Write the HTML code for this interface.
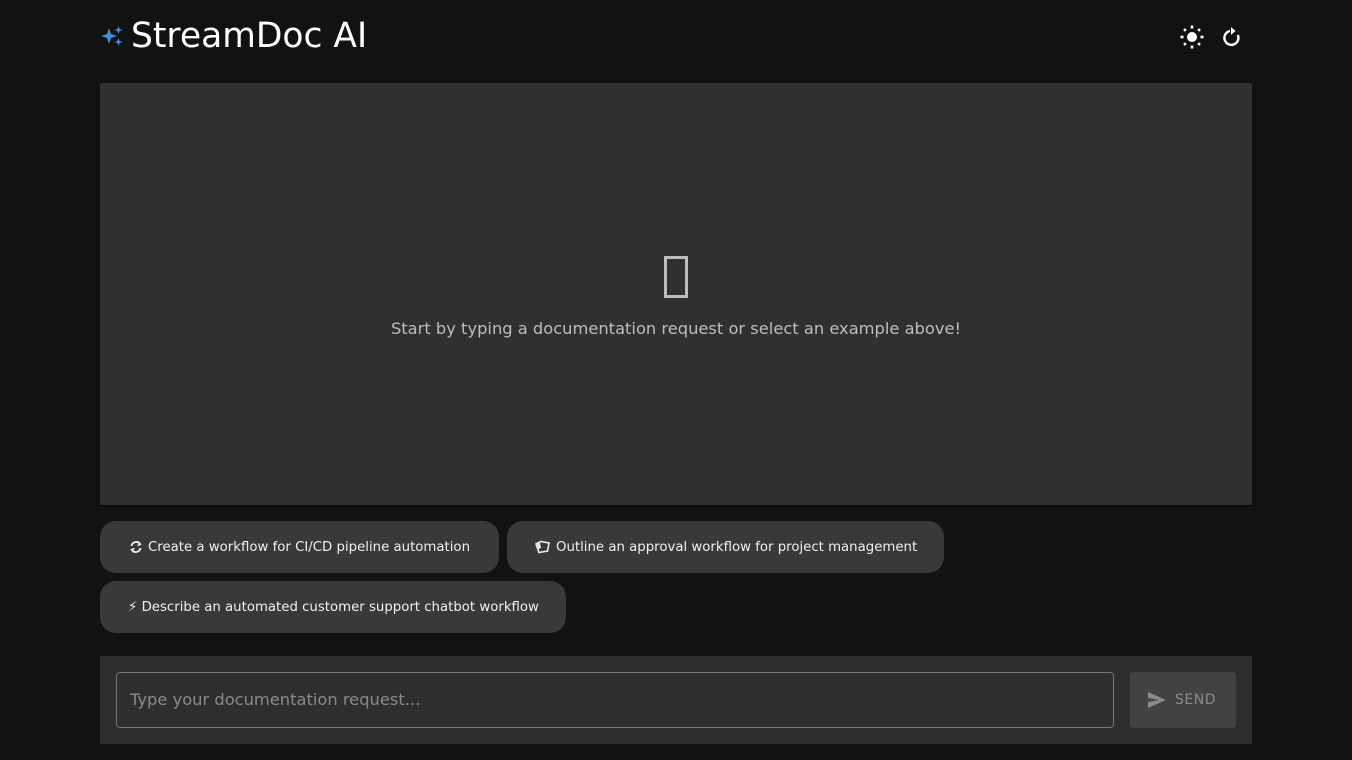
<!DOCTYPE html>
<html><head><meta charset="utf-8"><style>
*{box-sizing:border-box;margin:0;padding:0}
body{width:1352px;height:760px;background:#121212;font-family:"DejaVu Sans","Liberation Sans",sans-serif;color:#fff;position:relative;overflow:hidden}
.title{position:absolute;left:100px;top:14px;display:flex;align-items:center;font-size:34.5px;height:44px}
.title svg{margin-right:7px}
.icons{position:absolute;top:24px;left:1180px}
.panel{position:absolute;left:100px;top:83px;width:1152px;height:422px;background:#303030;box-shadow:0 1px 3px rgba(0,0,0,.5)}
.box{position:absolute;left:664px;top:256px;width:24px;height:42px;border:3px solid #bdbdbd}
.msg{position:absolute;left:0;width:1352px;top:319px;text-align:center;font-size:16.3px;color:#bdbdbd}
.chip{position:absolute;height:52px;background:#393939;border-radius:16px;font-size:13.3px;color:#f0f0f0;display:flex;align-items:center;padding-left:29px}
.chip svg{margin-right:5px}
.bar{position:absolute;left:100px;top:656px;width:1152px;height:88px;background:#2e2e2e}
.inp{position:absolute;left:116px;top:672px;width:998px;height:56px;border:1px solid #777;border-radius:4px;font-size:16.3px;color:#8a8a8a;padding-left:13px;line-height:54px}
.send{position:absolute;left:1130px;top:672px;width:106px;height:56px;background:#424242;border-radius:4px;color:#8a8a8a;font-size:14px;letter-spacing:.5px;display:flex;align-items:center;padding-left:17px}
</style></head><body>
<div class="title"><svg width="24" height="26" viewBox="0 0 24 26"><path fill="#3d8fe0" d="M9 5 L11 11 L17 13 L11 15 L9 21 L7 15 L1 13 L7 11Z M18.5 3 L19.5 6 L22.5 7 L19.5 8 L18.5 11 L17.5 8 L14.5 7 L17.5 6Z M18.5 15 L19.5 18 L22.5 19 L19.5 20 L18.5 23 L17.5 20 L14.5 19 L17.5 18Z"/></svg>StreamDoc AI</div>
<svg class="icons" width="66" height="26" viewBox="0 0 66 26">
<circle cx="12" cy="13" r="5" fill="#fff"/>
<g stroke="#fff" stroke-width="2.6" stroke-linecap="butt"><line x1="12" y1="1.5" x2="12" y2="4.5"/><line x1="12" y1="21.5" x2="12" y2="24.5"/><line x1="0.5" y1="13" x2="3.5" y2="13"/><line x1="20.5" y1="13" x2="23.5" y2="13"/><line x1="4" y1="5" x2="5.8" y2="6.8"/><line x1="18.2" y1="19.2" x2="20" y2="21"/><line x1="4" y1="21" x2="5.8" y2="19.2"/><line x1="18.2" y1="6.8" x2="20" y2="5"/></g>
<path d="M50 7 A7 7 0 1 0 57.8 11" fill="none" stroke="#fff" stroke-width="2.4"/><path d="M51 3 L55.5 7 L51 11Z" fill="#fff"/>
</svg>
<div class="panel"></div>
<div class="box"></div>
<div class="msg">Start by typing a documentation request or select an example above!</div>
<div class="chip" style="left:100px;top:521px;width:399px"><svg width="14" height="14" viewBox="0 0 14 14" fill="none" stroke="#eee" stroke-width="1.8"><path d="M2.5 6 A4.7 4.7 0 0 1 11 4"/><path d="M11.5 8 A4.7 4.7 0 0 1 3 10"/><path d="M9 1.5 L11.5 4.3 L8.5 5.5" stroke-width="1.5"/><path d="M5 12.5 L2.5 9.7 L5.5 8.5" stroke-width="1.5"/></svg>Create a workflow for CI/CD pipeline automation</div>
<div class="chip" style="left:507px;top:521px;width:437px;padding-left:28px"><svg width="16" height="14" viewBox="0 0 16 14"><path d="M1 4 L6 1.5 L14 3 L12.5 11 L4 12.5Z" fill="none" stroke="#eee" stroke-width="1.6"/><path d="M2 4 L5 3 L6 8 L3.5 9Z" fill="#eee"/></svg>Outline an approval workflow for project management</div>
<div class="chip" style="left:100px;top:581px;width:466px;padding-left:28px">⚡︎ Describe an automated customer support chatbot workflow</div>
<div class="bar"></div>
<div class="inp">Type your documentation request...</div>
<div class="send"><svg width="20" height="18" viewBox="0 0 20 18" style="margin-right:8px"><path d="M1 1 L19 9 L1 17 L1 11 L12 9 L1 7Z" fill="#8a8a8a"/></svg>SEND</div>
</body></html>
